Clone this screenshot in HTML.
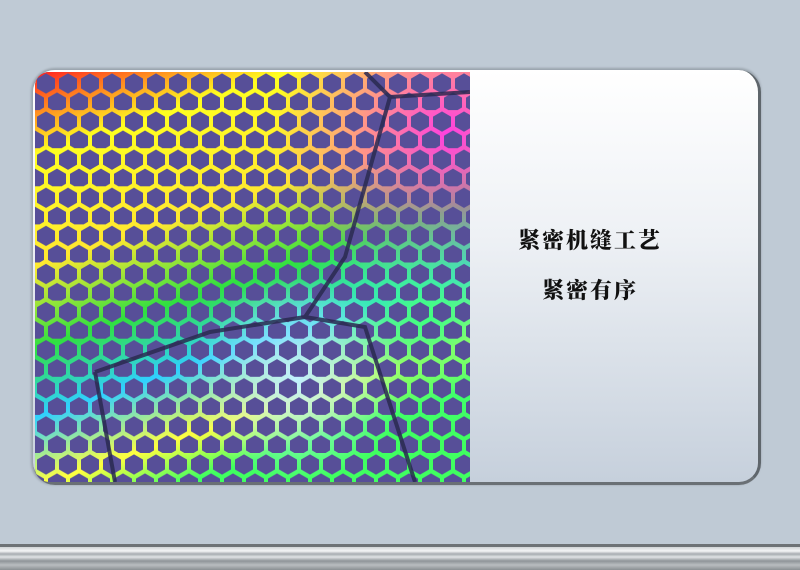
<!DOCTYPE html>
<html><head><meta charset="utf-8"><style>
html,body{margin:0;padding:0}
body{width:800px;height:570px;background:#bfcad5;position:relative;overflow:hidden;font-family:"Liberation Sans","Noto Serif CJK SC",serif}
.card{position:absolute;left:33px;top:70px;width:725px;height:412px;border-radius:22px;background:linear-gradient(180deg,#ffffff 0%,#eef1f5 40%,#c6d0dc 100%);border-right:3px solid #5f666c;border-bottom:3px solid #6a7075;box-shadow:0 -2px 2px #9aa4ad,-2px 0 2px #9aa4ad}
.img{position:absolute;left:35px;top:72px;width:435px;height:410px;border-radius:14px 0 0 14px;overflow:hidden}
.t{position:absolute;left:470px;width:240px;text-align:center;font-family:"Noto Serif CJK SC","WenQuanYi Zen Hei",serif;font-weight:900;font-size:22px;color:#111;letter-spacing:2px}
.bar{position:absolute;left:0;top:544px;width:800px;height:26px;background:linear-gradient(180deg,#6d7276 0,#6d7276 3px,#cfd3d6 3px,#f4f5f6 7px,#a7acb0 10px,#e0e3e5 13px,#8f9498 17px,#b9bdc0 21px,#8a8f93 26px)}
</style></head><body>
<div class="card"></div>
<div class="img">
<svg width="435" height="410" viewBox="0 0 435 410">
<defs>
<pattern id="hx" width="22" height="38.1" patternUnits="userSpaceOnUse">
<rect width="22" height="38.1" fill="#fff"/>
<g fill="#000">
<polygon points="11,1.3 20,6.5 20,16.5 11,21.7 2,16.5 2,6.5"/>
<polygon points="0,20.35 9,25.55 9,35.55 0,40.75 -9,35.55 -9,25.55"/>
<polygon points="22,20.35 31,25.55 31,35.55 22,40.75 13,35.55 13,25.55"/>
<polygon points="11,39.4 20,44.6 20,54.6 11,59.8 2,54.6 2,44.6"/>
<polygon points="11,-36.8 20,-31.6 20,-21.6 11,-16.4 2,-21.6 2,-31.6"/>
</g>
</pattern>
<mask id="m"><rect width="435" height="410" fill="url(#hx)"/></mask>
<linearGradient id="rb" x1="0" y1="0" x2="0.35" y2="1">
<stop offset="0" stop-color="#ff2020"/>
<stop offset="0.18" stop-color="#ffff20"/>
<stop offset="0.42" stop-color="#ffe830"/>
<stop offset="0.6" stop-color="#30e040"/>
<stop offset="0.75" stop-color="#30d0ff"/>
<stop offset="0.9" stop-color="#ffff40"/>
<stop offset="1" stop-color="#40ff60"/>
</linearGradient>
<radialGradient id="mg" cx="0.95" cy="0.15" r="0.4">
<stop offset="0" stop-color="#ff40e0"/><stop offset="1" stop-color="#ff40e0" stop-opacity="0"/>
</radialGradient>
<radialGradient id="cy" cx="0.9" cy="0.6" r="0.3">
<stop offset="0" stop-color="#40ff80"/><stop offset="1" stop-color="#40ff80" stop-opacity="0"/>
</radialGradient>
<radialGradient id="wh" cx="0.6" cy="0.75" r="0.25">
<stop offset="0" stop-color="#c0f0ff"/><stop offset="1" stop-color="#c0f0ff" stop-opacity="0"/>
</radialGradient>
</defs>
<rect width="435" height="410" fill="#574f98"/>
<g mask="url(#m)">
<rect width="435" height="410" fill="url(#rb)"/>
<rect width="435" height="410" fill="url(#mg)"/>
<rect width="435" height="410" fill="url(#cy)"/>
<rect width="435" height="410" fill="url(#wh)"/>
</g>
<g stroke="#2a2a50" stroke-width="4" fill="none" opacity="0.85">
<path d="M330,0 L355,25 L435,20"/>
<path d="M355,25 L310,185 L270,245 L175,260 L60,300"/>
<path d="M270,245 L330,255 L380,410"/>
<path d="M60,300 L80,410"/>
</g>
</svg>
</div>
<div class="t" style="top:224px">紧密机缝工艺</div>
<div class="t" style="top:274px">紧密有序</div>
<div class="bar"></div>
</body></html>
